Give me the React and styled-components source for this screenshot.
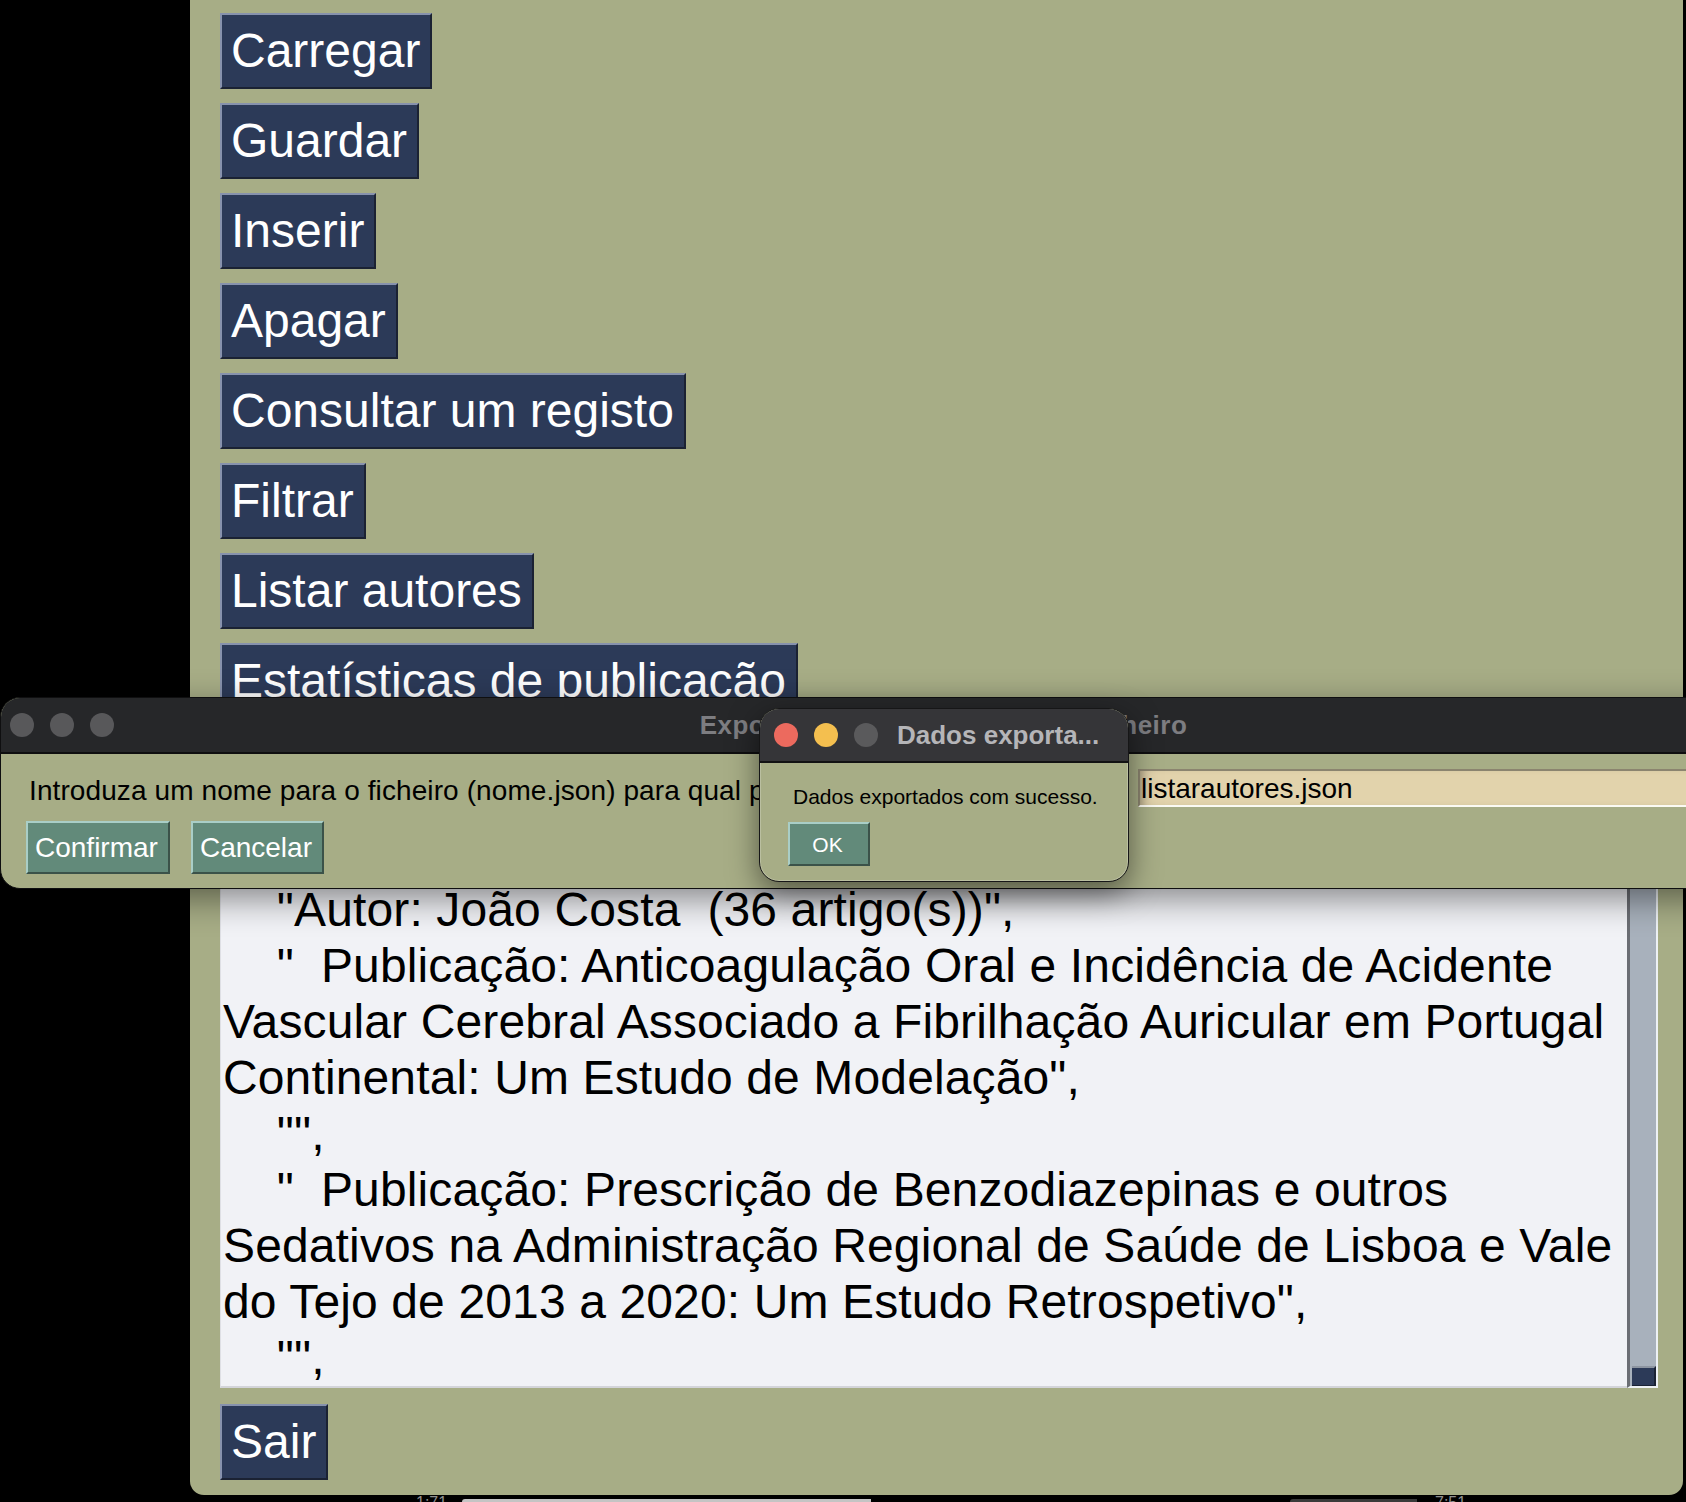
import React from "react";
import styled, { createGlobalStyle } from "styled-components";

const GlobalStyle = createGlobalStyle`
  html, body { margin: 0; padding: 0; background: #000; overflow: hidden; }
  body { font-family: "Liberation Sans", Arial, sans-serif; }
  * { box-sizing: border-box; }
`;

const FONT = `"Liberation Sans", Arial, sans-serif`;
const OLIVE = "#a7ad86";

const Screen = styled.div`
  position: relative;
  width: 1686px;
  height: 1502px;
  overflow: hidden;
  background: #000;
  display: flex;
  flex-direction: column;
`;

const MainWindow = styled.main`
  flex: none;
  margin-left: 190px;
  width: 1493px;
  height: 1495px;
  background: ${OLIVE};
  border-radius: 0 0 14px 14px;
  padding: 13px 0 0 30px;
  display: flex;
  flex-direction: column;
  align-items: flex-start;
  gap: 14px;
`;

const NavButton = styled.button`
  flex: none;
  height: 76px;
  margin-top: ${(p) => p.$extraTop || 0}px;
  padding: 0 10px 0 9px;
  display: flex;
  align-items: center;
  font-family: ${FONT};
  font-size: 48px;
  line-height: 1;
  color: #fff;
  background: #2c3a58;
  border: 2px solid;
  border-color: #8792ad #1b2233 #1b2233 #8792ad;
  white-space: nowrap;
  cursor: pointer;
`;

const TextRow = styled.div`
  flex: none;
  display: flex;
  height: 655px;
`;

const TextArea = styled.div`
  width: 1407px;
  height: 100%;
  background: #f1f2f6;
  border-bottom: 2px solid #d3d4d9;
  border-left: 1px solid #dfe0e5;
  padding-left: 2px;
  overflow: hidden;
  display: flex;
  flex-direction: column;
  justify-content: flex-end;
`;

const Line = styled.div`
  flex: none;
  height: 56px;
  font-family: ${FONT};
  font-size: 48px;
  line-height: 56px;
  letter-spacing: 0.13px;
  color: #000;
  white-space: pre;
`;

const Scrollbar = styled.div`
  width: 31px;
  height: 100%;
  background: #a8b1bc;
  border-left: 3px solid #6b6e74;
  border-right: 2px solid #edf1f5;
  border-bottom: 2px solid #edf1f5;
  padding: 0 0 0 2px;
  display: flex;
  flex-direction: column;
  justify-content: flex-end;
`;

const Thumb = styled.div`
  height: 20px;
  background: #2c3a58;
  border-top: 2px solid #8d95a1;
  border-right: 2px solid #1a2234;
  border-bottom: 1px solid #1a2234;
`;

const BottomStrip = styled.div`
  flex: none;
  height: 7px;
  display: flex;
  align-items: flex-start;
  overflow: hidden;
`;

const Stamp = styled.span`
  flex: none;
  margin-left: ${(p) => p.$left}px;
  width: ${(p) => p.$width}px;
  font-family: ${FONT};
  font-size: 16px;
  line-height: 16px;
  color: #8f8f8f;
`;

const StripBar = styled.span`
  flex: none;
  margin-left: ${(p) => p.$left}px;
  margin-top: 4px;
  width: ${(p) => p.$width}px;
  height: 3px;
  background: ${(p) => p.$color};
  border-top-left-radius: 6px;
`;

/* ---------- export dialog ---------- */

const Dialog = styled.section`
  position: absolute;
  left: 0;
  top: 697px;
  width: 1887px;
  height: 192px;
  border-radius: 20px;
  border: 1px solid #0f0f10;
  background: ${OLIVE};
  overflow: hidden;
  box-shadow: 0 10px 34px rgba(0, 0, 0, 0.45);
  display: flex;
  flex-direction: column;
`;

const TitleBar = styled.header`
  flex: none;
  height: ${(p) => p.$height}px;
  background: ${(p) => p.$bg};
  border-bottom: 2px solid #0e0e0f;
  display: grid;
  grid-template-columns: 1fr auto 1fr;
  align-items: center;
  padding: 0 9px;
`;

const Lights = styled.div`
  display: flex;
  gap: 16px;
`;

const Light = styled.span`
  width: 24px;
  height: 24px;
  border-radius: 50%;
  background: ${(p) => p.$color};
`;

const WindowTitle = styled.div`
  font-family: ${FONT};
  font-weight: bold;
  font-size: 26px;
  letter-spacing: 0.5px;
  color: #7d7d81;
  white-space: nowrap;
`;

const DialogBody = styled.div`
  padding: 15px 0 0 25px;
  display: flex;
  flex-direction: column;
  gap: 14px;
`;

const PromptRow = styled.div`
  display: grid;
  grid-template-columns: 1112px 1fr;
  align-items: center;
  height: 38px;
`;

const Prompt = styled.div`
  padding: 5px 0 0 3px;
  font-family: ${FONT};
  font-size: 28px;
  letter-spacing: 0.1px;
  color: #000;
  white-space: nowrap;
  overflow: hidden;
`;

const Entry = styled.div`
  height: 38px;
  background: #e2d3ac;
  border-top: 2px solid #8b846f;
  border-left: 2px solid #8b846f;
  border-bottom: 2px solid #fbfaf3;
  padding: 2px 0 0 1px;
  display: flex;
  align-items: center;
  font-family: ${FONT};
  font-size: 28px;
  color: #000;
  box-shadow: inset 8px 0 10px -6px rgba(0, 0, 0, 0.3);
`;

const ButtonRow = styled.div`
  display: flex;
  gap: 21px;
`;

const ActionButton = styled.button`
  height: ${(p) => p.$height}px;
  min-width: ${(p) => p.$minWidth || 0}px;
  padding: 0 10px 0 7px;
  display: flex;
  align-items: center;
  justify-content: center;
  font-family: ${FONT};
  font-size: ${(p) => p.$size}px;
  line-height: 1;
  color: #fff;
  background: #628a7a;
  border: 2px solid;
  border-color: #a9cec7 #3b5249 #3b5249 #a9cec7;
  cursor: pointer;
`;

/* ---------- success popup ---------- */

const Popup = styled.section`
  position: absolute;
  left: 759px;
  top: 708px;
  width: 370px;
  height: 174px;
  border-radius: 20px;
  border: 1px solid #161617;
  background: ${OLIVE};
  overflow: hidden;
  box-shadow: inset 0 0 0 1px rgba(255, 255, 255, 0.22),
    0 10px 30px rgba(0, 0, 0, 0.5);
  display: flex;
  flex-direction: column;
`;

const PopupTitleBar = styled.header`
  flex: none;
  height: 54px;
  background: #353538;
  border-bottom: 2px solid #121213;
  display: flex;
  align-items: center;
  padding-left: 14px;
`;

const PopupTitle = styled.div`
  margin-left: 19px;
  font-family: ${FONT};
  font-weight: bold;
  font-size: 26px;
  color: #b5b5b8;
  white-space: nowrap;
`;

const PopupBody = styled.div`
  padding: 22px 0 0 28px;
  display: flex;
  flex-direction: column;
  align-items: flex-start;
  gap: 13px;
`;

const PopupMessage = styled.div`
  margin-left: 5px;
  font-family: ${FONT};
  font-size: 21px;
  line-height: 24px;
  color: #000;
`;

const menu = [
  "Carregar",
  "Guardar",
  "Inserir",
  "Apagar",
  "Consultar um registo",
  "Filtrar",
  "Listar autores",
  "Estatísticas de publicação",
];

const lines = [
  '    "",',
  '    "Autor: João Costa  (36 artigo(s))",',
  '    "  Publicação: Anticoagulação Oral e Incidência de Acidente',
  "Vascular Cerebral Associado a Fibrilhação Auricular em Portugal",
  'Continental: Um Estudo de Modelação",',
  '    "",',
  '    "  Publicação: Prescrição de Benzodiazepinas e outros',
  "Sedativos na Administração Regional de Saúde de Lisboa e Vale",
  'do Tejo de 2013 a 2020: Um Estudo Retrospetivo",',
  '    "",',
];

export default function App() {
  return (
    <>
      <GlobalStyle />
      <Screen>
        <MainWindow>
          {menu.map((m) => (
            <NavButton key={m}>{m}</NavButton>
          ))}
          <TextRow>
            <TextArea>
              {lines.map((l, i) => (
                <Line key={i}>{l}</Line>
              ))}
            </TextArea>
            <Scrollbar>
              <Thumb />
            </Scrollbar>
          </TextRow>
          <NavButton $extraTop={2}>Sair</NavButton>
        </MainWindow>
        <BottomStrip>
          <Stamp $left={416} $width={46}>1:71</Stamp>
          <StripBar $left={0} $width={409} $color="#c4c4c4" />
          <StripBar $left={419} $width={127} $color="#3a3a3a" />
          <Stamp $left={18} $width={50}>7:51</Stamp>
        </BottomStrip>

        <Dialog>
          <TitleBar $height={56} $bg="#262729">
            <Lights>
              <Light $color="#58585a" />
              <Light $color="#58585a" />
              <Light $color="#58585a" />
            </Lights>
            <WindowTitle>Exportar lista de autores para ficheiro</WindowTitle>
            <span />
          </TitleBar>
          <DialogBody>
            <PromptRow>
              <Prompt>
                Introduza um nome para o ficheiro (nome.json) para qual pretende exportar os dados:
              </Prompt>
              <Entry>listarautores.json</Entry>
            </PromptRow>
            <ButtonRow>
              <ActionButton $height={53} $size={28}>Confirmar</ActionButton>
              <ActionButton $height={53} $size={28}>Cancelar</ActionButton>
            </ButtonRow>
          </DialogBody>
        </Dialog>

        <Popup>
          <PopupTitleBar>
            <Lights>
              <Light $color="#ec6a5e" />
              <Light $color="#f4bf4f" />
              <Light $color="#5a5a5c" />
            </Lights>
            <PopupTitle>Dados exporta...</PopupTitle>
          </PopupTitleBar>
          <PopupBody>
            <PopupMessage>Dados exportados com sucesso.</PopupMessage>
            <ActionButton $height={44} $size={21} $minWidth={82}>OK</ActionButton>
          </PopupBody>
        </Popup>
      </Screen>
    </>
  );
}
